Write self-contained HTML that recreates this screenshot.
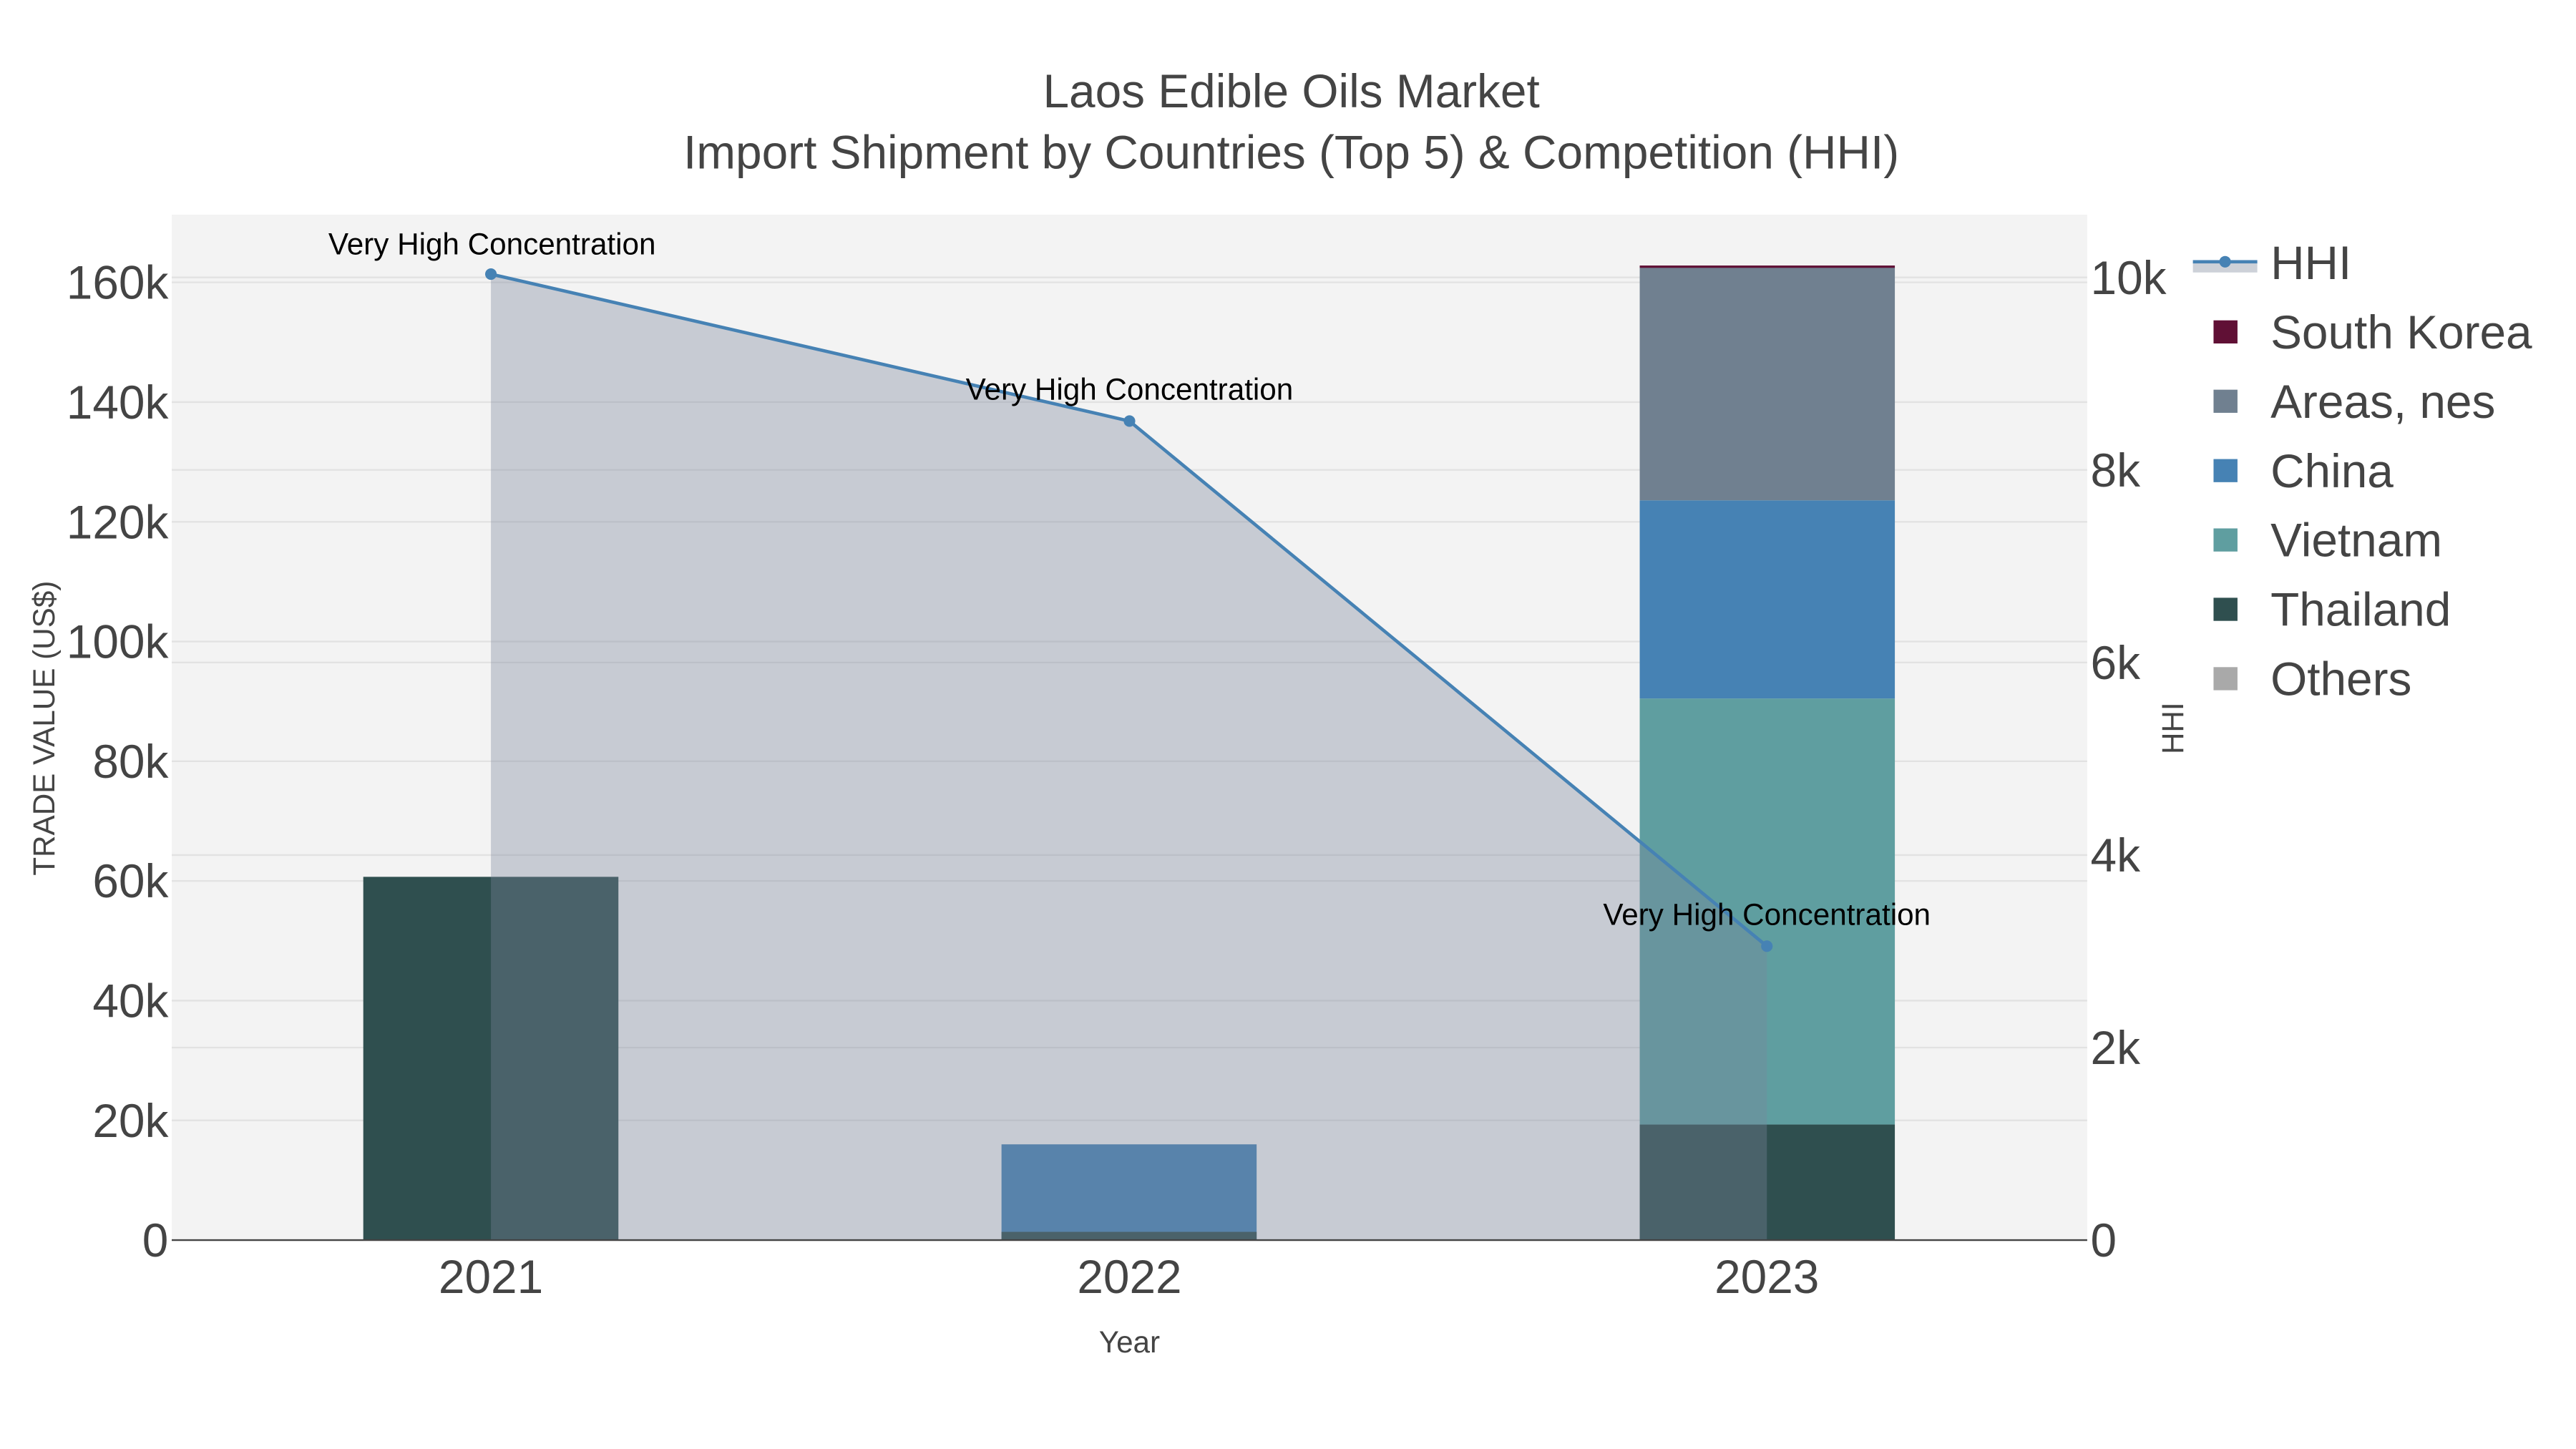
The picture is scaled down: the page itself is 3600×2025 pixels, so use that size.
<!DOCTYPE html>
<html><head><meta charset="utf-8"><style>
html,body{margin:0;padding:0;background:#fff;}
svg{display:block;}
text{font-family:"Liberation Sans",sans-serif;}
</style></head><body>
<svg width="3600" height="2025" viewBox="0 0 1560 877.5" xmlns="http://www.w3.org/2000/svg">
<rect width="1560" height="877.5" fill="#fff"/>
<rect x="104" y="130" width="1160" height="621" fill="#f3f3f3"/>
<g stroke="#e2e2e2" stroke-width="1">
<line x1="104" x2="1264" y1="678.5" y2="678.5"/><line x1="104" x2="1264" y1="606" y2="606"/>
<line x1="104" x2="1264" y1="533.5" y2="533.5"/><line x1="104" x2="1264" y1="461" y2="461"/>
<line x1="104" x2="1264" y1="388.5" y2="388.5"/><line x1="104" x2="1264" y1="316" y2="316"/>
<line x1="104" x2="1264" y1="243.5" y2="243.5"/><line x1="104" x2="1264" y1="171" y2="171"/>
<line x1="104" x2="1264" y1="634.4" y2="634.4"/><line x1="104" x2="1264" y1="517.8" y2="517.8"/>
<line x1="104" x2="1264" y1="401.2" y2="401.2"/><line x1="104" x2="1264" y1="284.6" y2="284.6"/>
<line x1="104" x2="1264" y1="168" y2="168"/>
</g>
<rect x="220" y="531" width="154.5" height="220" fill="#2f4f4f"/>
<rect x="606.5" y="693" width="154.5" height="58" fill="#4682b4"/>
<rect x="606.5" y="746" width="154.5" height="5" fill="#2f4f4f"/>
<rect x="993" y="681" width="154.5" height="70" fill="#2f4f4f"/>
<rect x="993" y="423" width="154.5" height="258" fill="#5f9ea0"/>
<rect x="993" y="303" width="154.5" height="120" fill="#4682b4"/>
<rect x="993" y="162" width="154.5" height="141" fill="#708090"/>
<rect x="993" y="160.8" width="154.5" height="1.4" fill="#601035"/>
<polygon points="297.3,166 684,255 1070,573 1070,751 297.3,751" fill="rgb(122,134,156)" fill-opacity="0.36"/>
<polyline points="297.3,166 684,255 1070,573" fill="none" stroke="#4682b4" stroke-width="2"/>
<circle cx="297.3" cy="166" r="3.5" fill="#4682b4"/><circle cx="684" cy="255" r="3.5" fill="#4682b4"/><circle cx="1070" cy="573" r="3.5" fill="#4682b4"/>
<line x1="104" x2="1264" y1="751" y2="751" stroke="#444" stroke-width="1"/>
<g font-size="18.3" fill="#000" text-anchor="middle">
<text x="298" y="154">Very High Concentration</text>
<text x="684" y="242">Very High Concentration</text>
<text x="1070" y="560">Very High Concentration</text>
</g>
<g font-size="28.5" fill="#444" text-anchor="middle">
<text x="782" y="65">Laos Edible Oils Market</text>
<text x="782" y="102">Import Shipment by Countries (Top 5) &amp; Competition (HHI)</text>
<text x="297.3" y="783">2021</text><text x="684" y="783">2022</text><text x="1070" y="783">2023</text>
</g>
<g font-size="28.5" fill="#444" text-anchor="end">
<text x="102" y="761">0</text><text x="102" y="688.5">20k</text><text x="102" y="616">40k</text>
<text x="102" y="543.5">60k</text><text x="102" y="471">80k</text><text x="102" y="398.5">100k</text>
<text x="102" y="326">120k</text><text x="102" y="253.5">140k</text><text x="102" y="181">160k</text>
</g>
<g font-size="28.5" fill="#444">
<text x="1266" y="761">0</text><text x="1266" y="644.4">2k</text><text x="1266" y="527.8">4k</text>
<text x="1266" y="411.2">6k</text><text x="1266" y="294.6">8k</text><text x="1266" y="178">10k</text>
</g>
<text x="684" y="819" font-size="18.3" fill="#444" text-anchor="middle">Year</text>
<text transform="translate(33,441) rotate(-90)" font-size="18.3" fill="#444" text-anchor="middle">TRADE VALUE (US$)</text>
<text transform="translate(1322,441) rotate(-90)" font-size="18.3" fill="#444" text-anchor="middle">HHI</text>
<rect x="1328" y="159" width="39" height="6" fill="#cdd1d8"/>
<line x1="1328" x2="1367" y1="158.5" y2="158.5" stroke="#4682b4" stroke-width="2"/>
<circle cx="1347.5" cy="158.5" r="3.5" fill="#4682b4"/>
<rect x="1340.5" y="194" width="14.5" height="14" fill="#601035"/>
<rect x="1340.5" y="236" width="14.5" height="14" fill="#708090"/>
<rect x="1340.5" y="278" width="14.5" height="14" fill="#4682b4"/>
<rect x="1340.5" y="320" width="14.5" height="14" fill="#5f9ea0"/>
<rect x="1340.5" y="362" width="14.5" height="14" fill="#2f4f4f"/>
<rect x="1340.5" y="404" width="14.5" height="14" fill="#a9a9a9"/>
<g font-size="28.5" fill="#444">
<text x="1375" y="169">HHI</text><text x="1375" y="211">South Korea</text>
<text x="1375" y="253">Areas, nes</text><text x="1375" y="295">China</text>
<text x="1375" y="337">Vietnam</text><text x="1375" y="379">Thailand</text>
<text x="1375" y="421">Others</text>
</g>
</svg>
</body></html>
